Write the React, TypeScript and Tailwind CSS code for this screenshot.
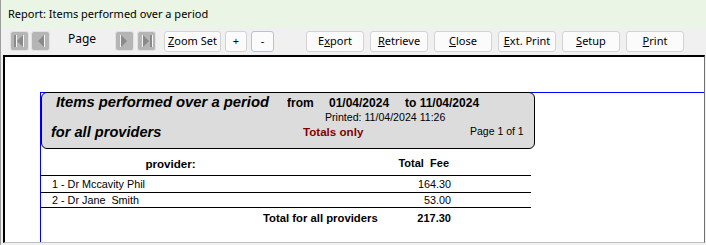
import React from "react";

const ui = { fontFamily: '"Noto Sans", "Open Sans", sans-serif' };
const rep = { fontFamily: '"Liberation Sans", Arial, sans-serif' };

function NavIcon({ kind }: { kind: "first" | "prev" | "next" | "last" }) {
  const left = kind === "first" || kind === "prev";
  const bar = kind === "first" || kind === "last";
  return (
    <div className="w-[19px] h-[20px] rounded-[3px] border border-[#e2e2e2] bg-[#b5b5b5] flex items-center justify-center">
      <svg width="15" height="14" viewBox="0 0 15 14">
        {left ? (
          <>
            {bar && <rect x="2" y="1" width="2" height="12" fill="#8a8a8a" />}
            {bar && <rect x="4" y="1" width="1" height="12" fill="#f4f4f4" />}
            <polygon points="11,1 5,7 11,13" fill="#8a8a8a" />
            <line x1="11.5" y1="1" x2="11.5" y2="13" stroke="#f4f4f4" strokeWidth="1" />
          </>
        ) : (
          <>
            <polygon points="4,1 10,7 4,13" fill="#8a8a8a" />
            <line x1="3.5" y1="1" x2="3.5" y2="13" stroke="#f4f4f4" strokeWidth="1" />
            {bar && <rect x="11" y="1" width="2" height="12" fill="#8a8a8a" />}
            {bar && <rect x="13" y="1" width="1" height="12" fill="#f4f4f4" />}
          </>
        )}
      </svg>
    </div>
  );
}

function Btn({
  children,
  w,
  focus,
}: {
  children: React.ReactNode;
  w: string;
  focus?: boolean;
}) {
  return (
    <div
      className={
        "h-[21px] rounded-[3px] border bg-[#fbfbfb] flex items-center justify-center text-[11px] text-black " +
        w +
        (focus ? " border-[#a9c6e4]" : " border-[#d3d3d3]")
      }
      style={ui}
    >
      {children}
    </div>
  );
}

export default function App() {
  return (
    <div className="w-[706px] h-[245px] bg-[#f0f0f0] border-l border-[#9c9c9c] flex flex-col overflow-hidden">
      <div
        className="h-[28px] shrink-0 bg-[#eaf5e6] flex items-center pl-[7px] text-[11px] text-black"
        style={ui}
      >
        Report: Items performed over a period
      </div>

      <div className="h-[27px] shrink-0 flex items-start pt-[3px] pl-[9px]">
        <NavIcon kind="first" />
        <div className="ml-[2px]">
          <NavIcon kind="prev" />
        </div>
        <div className="ml-[18px] w-[47px] text-[12px] leading-[16px] text-black" style={ui}>
          Page
        </div>
        <NavIcon kind="next" />
        <div className="ml-[3px]">
          <NavIcon kind="last" />
        </div>
        <div className="ml-[8px] flex gap-[4px]">
          <Btn w="w-[57px]">
            <span className="underline">Z</span>oom Set
          </Btn>
          <Btn w="w-[22px]">+</Btn>
          <Btn w="w-[23px]" focus>
            -
          </Btn>
        </div>
        <div className="ml-[32px] flex gap-[6px]">
          <Btn w="w-[58px]">
            E<span className="underline">x</span>port
          </Btn>
          <Btn w="w-[58px]">
            <span className="underline">R</span>etrieve
          </Btn>
          <Btn w="w-[58px]">
            <span className="underline">C</span>lose
          </Btn>
          <Btn w="w-[58px]">
            <span className="underline">E</span>xt. Print
          </Btn>
          <Btn w="w-[58px]">
            <span className="underline">S</span>etup
          </Btn>
          <Btn w="w-[58px]">
            <span className="underline">P</span>rint
          </Btn>
        </div>
      </div>

      <div className="ml-[2px] w-[702px] h-[188px] shrink-0 bg-white border-t-2 border-l-2 border-black border-r border-r-[#707070] border-b border-b-[#c0c0c0] overflow-hidden">
        <div className="ml-[35px] mt-[35px] h-full border-t border-l border-[#0000ff]" style={rep}>
          <div className="-mt-px w-[494px] h-[57px] rounded-[6px] border border-black bg-[#dcdcdc] text-black">
            <div className="h-[19px] flex items-center pl-[14px]">
              <span className="w-[231px] text-[14.8px] font-bold italic leading-[19px]">
                Items performed over a period
              </span>
              <span className="w-[42px] text-[12px] font-bold">from</span>
              <span className="w-[76px] text-[12px] font-bold">01/04/2024</span>
              <span className="text-[12px] font-bold">to 11/04/2024</span>
            </div>
            <div className="h-[11px] flex items-center pl-[283px] text-[10.6px] leading-[11px]">
              Printed: 11/04/2024 11:26
            </div>
            <div className="h-[18px] flex items-center pl-[9px]">
              <span className="w-[252px] text-[14.6px] font-bold italic leading-[18px]">
                for all providers
              </span>
              <span className="w-[167px] text-[11.6px] font-bold text-[#800000]">Totals only</span>
              <span className="text-[10.5px]">Page 1 of 1</span>
            </div>
          </div>

          <div className="w-[490px] text-black">
            <div className="h-[27px] pt-[3px] flex border-b border-black font-bold leading-[23px]">
              <div className="w-[259px] text-center text-[11.6px]">provider:</div>
              <div className="w-[149px] text-right whitespace-pre text-[11px]">Total  Fee</div>
            </div>
            <div className="h-[17px] pt-[1px] flex border-b border-black text-[10.8px] leading-[15px]">
              <div className="w-[300px] pl-[11px]">1 - Dr Mccavity Phil</div>
              <div className="w-[110px] text-right">164.30</div>
            </div>
            <div className="h-[15px] flex border-b border-black text-[10.8px] leading-[14px]">
              <div className="w-[300px] pl-[11px] whitespace-pre">2 - Dr Jane  Smith</div>
              <div className="w-[110px] text-right">53.00</div>
            </div>
            <div className="h-[20px] flex font-bold leading-[20px]">
              <div className="w-[222px]" />
              <div className="w-[124px] text-[11.3px]">Total for all providers</div>
              <div className="w-[64px] text-right text-[11px]">217.30</div>
            </div>
          </div>
        </div>
      </div>
    </div>
  );
}
